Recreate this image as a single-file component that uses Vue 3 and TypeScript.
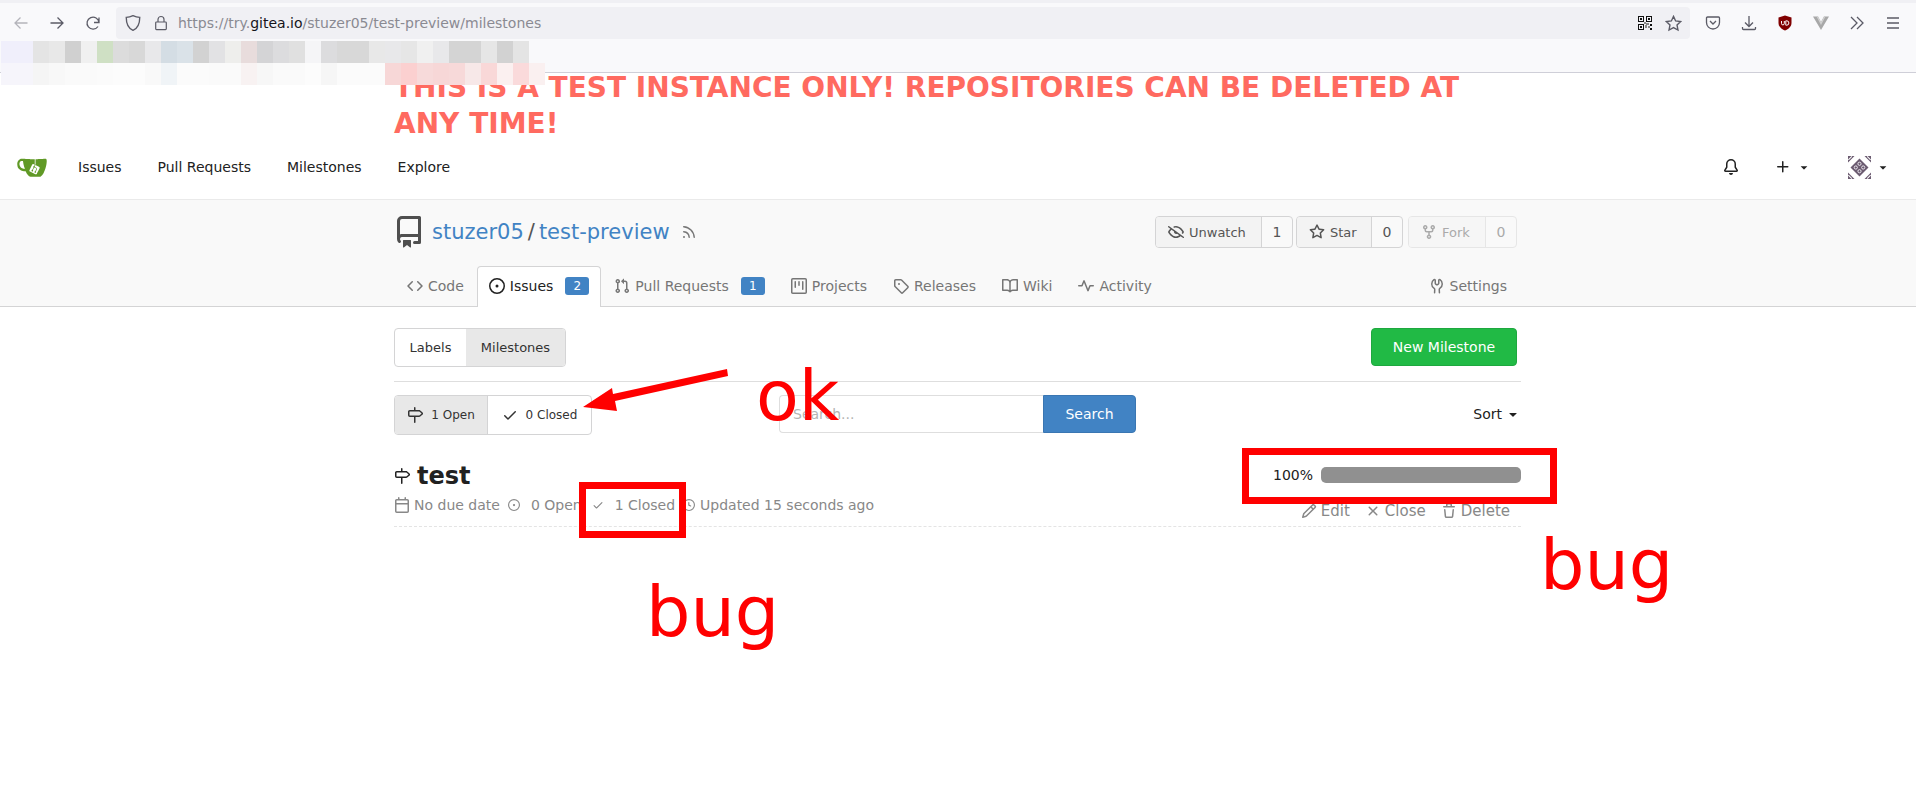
<script setup lang="ts">
const row1: string[] = ['#f0effb','#f0effb','#e4e4e4','#e8e8e8','#d0d0d0','#f0f0f0','#cfe0c4','#dcdcdc','#d8d8d8','#e8e8ea','#d4dde4','#dae2e8','#d2d2d2','#e2e2e4','#eeeeec','#e8dcdc','#d4d4d6','#dcdcde','#e0e0e0','#f5f5f7','#dcdcde','#d8d8d8','#d8d8d8','#e8e8e8','#e8e8ea','#e6e6e6','#f0f0f0','#e8e8ea','#d4d4d4','#d4d4d4','#e6e6e6','#d2d2d2','#e4e4e4']
const row2: string[] = ['#f6f5fb','#f6f5fb','#f5f5f5','#f8f8f8','#fafafa','#fafafa','#fbfbfb','#fcfcfc','#fcfcfc','#f9f9f9','#f0f4f7','#fbfbfb','#fbfbfb','#fafafa','#fafafa','#f8f2f2','#f7f7f7','#fafafa','#fafafa','#fcfcfc','#f6f6f6','#fbfbfb','#fbfbfb','#fbfbfb','#f7d7d7','#fbd0d0','#f7dada','#f7d7d7','#f7d9d9','#f7e8e8','#f9d8d8','#fbf0f0','#fadadb','#faf0f0']
const navItems: string[] = ['Issues', 'Pull Requests', 'Milestones', 'Explore']
</script>

<template>
  <div class="page">
    <header class="browser">
      <div class="topstrip"></div>
      <div class="toolbar">
        <div class="tb-left">
          <svg class="bi dim" viewBox="0 0 16 16"><path d="M14.500 8H2M7.500 2.500 2 8l5.500 5.500"/></svg>
          <svg class="bi" viewBox="0 0 16 16"><path d="M1.500 8H14M8.500 2.500 14 8l-5.500 5.500"/></svg>
          <svg class="bi" viewBox="0 0 16 16"><path d="M14 7.500A6 6 0 1 0 13 11.500M14 2.500v5h-5"/></svg>
        </div>
        <div class="urlbar">
          <svg class="ui" viewBox="0 0 16 16"><path d="M8 1.500c2 1 4 1.500 6 1.500 0 5-1.500 9.500-6 11.500C3.500 12.500 2 8 2 3c2 0 4-.5 6-1.500z"/></svg>
          <svg class="ui lock" viewBox="0 0 16 16"><path d="M5 7V4.500a3 3 0 0 1 6 0V7M3.500 7h9a.8.8 0 0 1 .8.8v6a.8.8 0 0 1-.8.8h-9a.8.8 0 0 1-.8-.8v-6a.8.8 0 0 1 .8-.8z"/></svg>
          <span class="url">https://try.<b>gitea.io</b>/stuzer05/test-preview/milestones</span>
          <svg class="qr" viewBox="0 0 14 14"><path fill="#111" d="M0 0h6v6H0zM1 1v4h4V1zM2 2h2v2H2zM8 0h6v6H8zM9 1v4h4V1zM10 2h2v2h-2zM0 8h6v6H0zM1 9v4h4V9zM2 10h2v2H2z" fill-rule="evenodd"/><path fill="#888" d="M6 6h2v2H6zM8 7h3v2H8zM7 9h2v3H7zM10 10h2v2h-2z"/><path fill="#111" d="M12 12h2v2h-2zM12 8h2v2h-2z"/></svg>
          <svg class="bi star" viewBox="0 0 16 16"><path d="m8 1.300 2 4.300 4.700.6-3.400 3.200.9 4.700L8 11.800l-4.200 2.300.9-4.700L1.300 6.200 6 5.600z"/></svg>
        </div>
        <div class="tb-right">
          <svg class="bi" viewBox="0 0 16 16"><path d="M2.500 2h11a1 1 0 0 1 1 1v4.500a6.500 6.500 0 0 1-13 0V3a1 1 0 0 1 1-1zM5 6l3 3 3-3"/></svg>
          <svg class="bi" viewBox="0 0 16 16"><path d="M8 1v10M4 7.500 8 11.500l4-4M1.500 12v1.500a1 1 0 0 0 1 1h11a1 1 0 0 0 1-1V12"/></svg>
          <svg class="bi" viewBox="0 0 16 16"><path class="ub" d="M8 .5 14.500 2.500V8c0 3.500-3 6.200-6.500 7.500C4.500 14.200 1.500 11.500 1.500 8V2.500z"/><path class="ub2" d="M4.500 6v2.500a1.400 1.400 0 0 0 2.800 0V6M8.800 5.800v4.400h.9a2.200 2.200 0 0 0 0-4.400z"/></svg>
          <svg class="bi" viewBox="0 0 16 16"><path class="vv" d="M0 1.500h5L8 7l3-5.500h5L8 15z"/><path class="vv2" d="M3.500 1.500h1.500L8 7l3-5.500h1.500L8 10z"/></svg>
          <svg class="bi" viewBox="0 0 16 16"><path d="m2 2 6 6-6 6M8 2l6 6-6 6"/></svg>
          <svg class="bi" viewBox="0 0 16 16"><path d="M2 3h12M2 8h12M2 13h12"/></svg>
        </div>
      </div>
    </header>

    <h2 class="banner">THIS IS A TEST INSTANCE ONLY! REPOSITORIES CAN BE DELETED AT ANY TIME!</h2>

    <nav class="nav">
      <div class="nav-left">
        <svg class="logo" viewBox="0 0 640 640"><path fill="#fff" d="m395.900 484.200-126.900-61c-12.500-6-17.900-21.200-11.800-33.800l61-126.900c6-12.500 21.200-17.900 33.800-11.800 17.200 8.300 27.100 13 27.100 13l-.1-109.200 16.700-.1.100 117.100s57.400 24.200 83.100 40.100c3.700 2.300 10.200 6.800 12.900 14.400 2.100 6.100 2 13.100-1 19.300l-61 126.900c-6.200 12.700-21.400 18.100-33.900 12"/><path fill="#609926" d="M622.700 149.800c-4.100-4.100-9.600-4-9.600-4s-117.200 6.600-177.900 8c-13.300.3-26.500.6-39.600.7v117.200c-5.500-2.600-11.100-5.300-16.600-7.900 0-36.400-.1-109.200-.1-109.200-29 .4-89.200-2.200-89.200-2.200s-141.400-7.100-156.800-8.500c-9.800-.6-22.500-2.100-39 1.500-8.700 1.800-33.500 7.400-53.800 26.900C-4.900 212.400 6.600 276.200 8 285.800c1.700 11.700 6.900 44.200 31.700 72.500 45.800 56.100 144.400 54.800 144.400 54.800s12.100 28.900 30.600 55.500c25 33.100 50.700 58.900 75.700 62 63 0 188.900-.1 188.900-.1s12 .1 28.300-10.300c14-8.500 26.500-23.400 26.500-23.400S547 483 565 451.500c5.500-9.700 10.100-19.100 14.100-28 0 0 55.200-117.100 55.200-231.100-1.100-34.500-9.600-40.600-11.600-42.600M125.600 353.900c-25.900-8.500-36.900-18.700-36.900-18.700S69.600 321.800 60 295.400c-16.500-44.200-1.400-71.200-1.400-71.200s8.400-22.500 38.500-30c13.800-3.700 31-3.100 31-3.100s7.100 59.400 15.700 94.200c7.200 29.200 24.800 77.700 24.800 77.700s-26.100-3.100-43-9.100m300.300 107.600s-6.100 14.500-19.600 15.400c-5.800.4-10.300-1.200-10.300-1.200s-.3-.1-5.300-2.100l-112.900-55s-10.900-5.700-12.800-15.600c-2.200-8.100 2.700-18.100 2.700-18.100L322 273s4.800-9.700 12.200-13c.6-.3 2.300-1 4.500-1.500 8.100-2.100 18 2.800 18 2.800L467.400 315s12.600 5.700 15.300 16.200c1.900 7.400-.5 14-1.800 17.200-6.300 15.400-55 113.100-55 113.100"/><path fill="#609926" d="M326.800 380.100c-8.200.1-15.400 5.800-17.300 13.800s2 16.300 9.100 20c7.700 4 17.500 1.800 22.700-5.400 5.100-7.100 4.300-16.900-1.800-23.100l24-49.100c1.500.1 3.700.2 6.200-.5 4.100-.9 7.100-3.600 7.100-3.600 4.200 1.800 8.600 3.800 13.200 6.100 4.800 2.400 9.300 4.900 13.400 7.300.9.500 1.800 1.100 2.800 1.900 1.600 1.300 3.400 3.100 4.700 5.500 1.900 5.500-1.900 14.900-1.900 14.900-2.300 7.600-18.400 40.600-18.400 40.600-8.100-.2-15.300 5-17.700 12.500-2.600 8.100 1.100 17.300 8.900 21.300s17.400 1.700 22.500-5.300c5-6.800 4.600-16.300-1.100-22.600 1.900-3.700 3.700-7.400 5.600-11.300 5-10.400 13.500-30.400 13.500-30.400.9-1.700 5.700-10.300 2.700-21.300-2.500-11.400-12.600-16.700-12.600-16.700-12.200-7.900-29.200-15.200-29.200-15.200s0-4.100-1.100-7.100c-1.100-3.100-2.800-5.100-3.900-6.300 4.700-9.700 9.400-19.300 14.100-29-4.100-2-8.100-4-12.200-6.100-4.800 9.800-9.700 19.700-14.500 29.500-6.700-.1-12.900 3.500-16.100 9.400-3.400 6.300-2.700 14.100 1.900 19.800z"/></svg>
        <a v-for="n in navItems" :key="n" class="nav-item">{{ n }}</a>
      </div>
      <div class="nav-right">
        <svg class="oct s16 bell" viewBox="0 0 16 16"><path d="M8 16a2 2 0 0 0 1.985-1.750c.017-.137-.097-.250-.235-.250h-3.500c-.138 0-.252.113-.235.250A2 2 0 0 0 8 16z"/><path fill-rule="evenodd" d="M8 1.500A3.500 3.500 0 0 0 4.500 5v2.947c0 .346-.102.683-.294.970l-1.703 2.556a.018.018 0 0 0-.003.010l.001.006c0 .002.002.004.004.006a.017.017 0 0 0 .006.004l.007.001h10.964l.007-.001a.016.016 0 0 0 .006-.004.016.016 0 0 0 .004-.006l.001-.007a.017.017 0 0 0-.003-.010l-1.703-2.554a1.750 1.750 0 0 1-.294-.970V5A3.500 3.500 0 0 0 8 1.500zM3 5a5 5 0 0 1 10 0v2.947c0 .050.015.098.042.139l1.703 2.555A1.518 1.518 0 0 1 13.482 13H2.518a1.518 1.518 0 0 1-1.263-2.360l1.703-2.554A.250.250 0 0 0 3 7.947V5z"/></svg>
        <svg class="oct s16 plus" viewBox="0 0 16 16"><path d="M7.750 2a.750.750 0 0 1 .750.750V7h4.250a.750.750 0 1 1 0 1.500H8.500v4.250a.750.750 0 1 1-1.500 0V8.500H2.750a.750.750 0 0 1 0-1.500H7V2.750A.750.750 0 0 1 7.750 2z"/></svg>
        <svg class="oct s14 caret1" viewBox="0 0 16 16"><path d="M4.427 7.427l3.396 3.396a.250.250 0 0 0 .354 0l3.396-3.396A.250.250 0 0 0 11.396 7H4.604a.250.250 0 0 0-.177.427z"/></svg>
        <svg class="avatar" viewBox="0 0 25 25"><path fill="#6b5b70" d="M12.500 3.500 21.500 12.500 12.500 21.500 3.500 12.500z"/><g fill="none" stroke="#e9e5ec" stroke-width="1"><circle cx="12.500" cy="8.800" r="1.600"/><circle cx="8.800" cy="12.500" r="1.600"/><circle cx="16.200" cy="12.500" r="1.600"/><circle cx="12.500" cy="16.200" r="1.600"/></g><path fill="#6b5b70" d="M1 1h6.500L1 7.500zM24 1h-6.500L24 7.500zM1 24h6.500L1 17.500zM24 24h-6.500L24 17.500z"/><path fill="#fff" d="M1 4.500 4.500 1l.7.7-3.500 3.500zM24 4.500 20.500 1l-.7.7 3.500 3.500zM1 20.500l3.500 3.500.7-.7-3.500-3.500zM24 20.500l-3.500 3.500-.7-.7 3.500-3.500z"/></svg>
        <svg class="oct s14 caret2" viewBox="0 0 16 16"><path d="M4.427 7.427l3.396 3.396a.250.250 0 0 0 .354 0l3.396-3.396A.250.250 0 0 0 11.396 7H4.604a.250.250 0 0 0-.177.427z"/></svg>
      </div>
    </nav>

    <section class="repo-head">
      <div class="container">
        <div class="repo-title">
          <div class="repo-name">
            <svg class="oct repo-icon" viewBox="0 0 16 16"><path fill-rule="evenodd" d="M2 2.500A2.500 2.500 0 0 1 4.500 0h8.750a.750.750 0 0 1 .750.750v12.500a.750.750 0 0 1-.750.750h-2.500a.750.750 0 1 1 0-1.500h1.750v-2h-8a1 1 0 0 0-.714 1.700.750.750 0 0 1-1.072 1.050A2.495 2.495 0 0 1 2 11.500v-9zm10.500-1V9h-8c-.356 0-.694.074-1 .208V2.500a1 1 0 0 1 1-1h8zM5 12.250v3.250a.250.250 0 0 0 .4.200l1.450-1.087a.250.250 0 0 1 .3 0L8.600 15.700a.250.250 0 0 0 .4-.200v-3.250a.250.250 0 0 0-.250-.250h-3.500a.250.250 0 0 0-.250.250z"/></svg>
            <a class="link">stuzer05</a><span class="slash">/</span><a class="link">test-preview</a>
            <svg class="oct s16 rss" viewBox="0 0 16 16"><path d="M2.002 2.725a.750.750 0 0 1 .797-.699C8.790 2.420 13.580 7.210 13.974 13.201a.750.750 0 1 1-1.497.098 10.502 10.502 0 0 0-9.776-9.776.750.750 0 0 1-.700-.798zM2 13a1 1 0 1 1 2 0 1 1 0 0 1-2 0zm.840-5.950a.750.750 0 1 0-.130 1.494 5.250 5.250 0 0 1 4.747 4.746.750.750 0 1 0 1.494-.130 6.750 6.750 0 0 0-6.110-6.110z"/></svg>
          </div>
          <div class="repo-btns">
            <div class="rbtn">
              <span class="rb-main w-watch"><svg class="oct s16" viewBox="0 0 16 16"><path fill-rule="evenodd" d="M.143 2.310a.750.750 0 0 1 1.047-.167l14.500 10.500a.750.750 0 1 1-.880 1.214l-2.248-1.628C11.346 13.190 9.792 14 8 14c-1.981 0-3.670-.992-4.933-2.078C1.797 10.832.880 9.577.430 8.900a1.618 1.618 0 0 1 0-1.797c.353-.533.995-1.420 1.868-2.305L.310 3.357A.750.750 0 0 1 .143 2.310zm3.386 3.378a14.210 14.210 0 0 0-1.850 2.244.120.120 0 0 0-.022.068c0 .021.006.045.022.068.412.621 1.242 1.750 2.366 2.717C5.175 11.758 6.527 12.500 8 12.500c1.195 0 2.310-.488 3.290-1.191L9.063 9.695A2 2 0 0 1 6.058 7.520l-2.530-1.832zM8 3.500c-.516 0-1.017.090-1.499.251a.750.750 0 1 1-.473-1.423A6.230 6.230 0 0 1 8 2c1.981 0 3.670.992 4.933 2.078 1.270 1.091 2.187 2.345 2.637 3.023a1.619 1.619 0 0 1 0 1.798c-.110.166-.248.365-.410.587a.750.750 0 1 1-1.210-.887c.148-.201.272-.382.371-.530a.119.119 0 0 0 0-.137c-.412-.621-1.242-1.750-2.366-2.717C10.825 4.242 9.473 3.500 8 3.500z"/></svg>Unwatch</span>
              <span class="rb-count">1</span>
            </div>
            <div class="rbtn">
              <span class="rb-main w-star"><svg class="oct s16" viewBox="0 0 16 16"><path fill-rule="evenodd" d="M8 .250a.750.750 0 0 1 .673.418l1.882 3.815 4.210.612a.750.750 0 0 1 .416 1.279l-3.046 2.970.719 4.192a.750.750 0 0 1-1.088.791L8 12.347l-3.766 1.980a.750.750 0 0 1-1.088-.790l.720-4.194L.818 6.374a.750.750 0 0 1 .416-1.280l4.210-.611L7.327.668A.750.750 0 0 1 8 .250zm0 2.445L6.615 5.500a.750.750 0 0 1-.564.410l-3.097.450 2.240 2.184a.750.750 0 0 1 .216.664l-.528 3.084 2.769-1.456a.750.750 0 0 1 .698 0l2.770 1.456-.530-3.084a.750.750 0 0 1 .216-.664l2.240-2.183-3.096-.450a.750.750 0 0 1-.564-.410L8 2.694v.001z"/></svg>Star</span>
              <span class="rb-count">0</span>
            </div>
            <div class="rbtn disabled">
              <span class="rb-main w-fork"><svg class="oct s16" viewBox="0 0 16 16"><path fill-rule="evenodd" d="M5 3.250a.750.750 0 1 1-1.500 0 .750.750 0 0 1 1.500 0zm0 2.122a2.250 2.250 0 1 0-1.500 0v.878A2.250 2.250 0 0 0 5.750 8.500h1.500v2.128a2.251 2.251 0 1 0 1.500 0V8.500h1.500a2.250 2.250 0 0 0 2.250-2.250v-.878a2.250 2.250 0 1 0-1.500 0v.878a.750.750 0 0 1-.750.750h-4.500A.750.750 0 0 1 5 6.250v-.878zm3.750 7.378a.750.750 0 1 1-1.500 0 .750.750 0 0 1 1.500 0zm3-8.750a.750.750 0 1 0 0-1.500.750.750 0 0 0 0 1.500z"/></svg>Fork</span>
              <span class="rb-count">0</span>
            </div>
          </div>
        </div>
        <div class="tabs">
          <a class="tab"><svg class="oct s16" viewBox="0 0 16 16"><path d="M4.720 3.220a.750.750 0 0 1 1.060 1.060L2.060 8l3.720 3.720a.750.750 0 1 1-1.060 1.060L.470 8.530a.750.750 0 0 1 0-1.060l4.250-4.250zm6.560 0a.750.750 0 1 0-1.060 1.060L13.940 8l-3.720 3.720a.750.750 0 1 0 1.060 1.060l4.250-4.250a.750.750 0 0 0 0-1.060l-4.250-4.250z"/></svg>Code</a>
          <a class="tab active"><svg class="oct s16" viewBox="0 0 16 16"><path d="M8 9.500a1.500 1.500 0 1 0 0-3 1.500 1.500 0 0 0 0 3z"/><path fill-rule="evenodd" d="M8 0a8 8 0 1 0 0 16A8 8 0 0 0 8 0zM1.500 8a6.500 6.500 0 1 1 13 0 6.500 6.500 0 0 1-13 0z"/></svg>Issues<span class="count">2</span></a>
          <a class="tab"><svg class="oct s16" viewBox="0 0 16 16"><path fill-rule="evenodd" d="M7.177 3.073L9.573.677A.250.250 0 0 1 10 .854v4.792a.250.250 0 0 1-.427.177L7.177 3.427a.250.250 0 0 1 0-.354zM3.750 2.500a.750.750 0 1 0 0 1.500.750.750 0 0 0 0-1.500zm-2.250.750a2.250 2.250 0 1 1 3 2.122v5.256a2.251 2.251 0 1 1-1.500 0V5.372A2.250 2.250 0 0 1 1.500 3.250zM11 2.500h-1V4h1a1 1 0 0 1 1 1v5.628a2.251 2.251 0 1 0 1.500 0V5A2.500 2.500 0 0 0 11 2.500zm1 10.250a.750.750 0 1 1 1.500 0 .750.750 0 0 1-1.500 0zM3.750 12a.750.750 0 1 0 0 1.500.750.750 0 0 0 0-1.500z"/></svg>Pull Requests<span class="count">1</span></a>
          <a class="tab"><svg class="oct s16" viewBox="0 0 16 16"><path fill-rule="evenodd" d="M1.750 0A1.750 1.750 0 0 0 0 1.750v12.500C0 15.216.784 16 1.750 16h12.500A1.750 1.750 0 0 0 16 14.250V1.750A1.750 1.750 0 0 0 14.250 0H1.750zM1.500 1.750a.250.250 0 0 1 .250-.250h12.500a.250.250 0 0 1 .250.250v12.500a.250.250 0 0 1-.250.250H1.750a.250.250 0 0 1-.250-.250V1.750zM11.750 3a.750.750 0 0 0-.750.750v7.500a.750.750 0 0 0 1.500 0v-7.500a.750.750 0 0 0-.750-.750zm-8.250.750a.750.750 0 0 1 1.500 0v5.500a.750.750 0 0 1-1.500 0v-5.500zM8 3a.750.750 0 0 0-.750.750v3.500a.750.750 0 0 0 1.500 0v-3.500A.750.750 0 0 0 8 3z"/></svg>Projects</a>
          <a class="tab"><svg class="oct s16" viewBox="0 0 16 16"><path fill-rule="evenodd" d="M2.500 7.775V2.750a.250.250 0 0 1 .250-.250h5.025a.250.250 0 0 1 .177.073l6.250 6.250a.250.250 0 0 1 0 .354l-5.025 5.025a.250.250 0 0 1-.354 0l-6.250-6.250a.250.250 0 0 1-.073-.177zm-1.500 0V2.750C1 1.784 1.784 1 2.750 1h5.025c.464 0 .910.184 1.238.513l6.250 6.250a1.750 1.750 0 0 1 0 2.474l-5.026 5.026a1.750 1.750 0 0 1-2.474 0l-6.250-6.250A1.750 1.750 0 0 1 1 7.775zM6 5a1 1 0 1 0 0 2 1 1 0 0 0 0-2z"/></svg>Releases</a>
          <a class="tab"><svg class="oct s16" viewBox="0 0 16 16"><path fill-rule="evenodd" d="M0 1.750A.750.750 0 0 1 .750 1h4.253c1.227 0 2.317.590 3 1.501A3.744 3.744 0 0 1 11.006 1h4.245a.750.750 0 0 1 .750.750v10.500a.750.750 0 0 1-.750.750h-4.507a2.250 2.250 0 0 0-1.591.659l-.622.621a.750.750 0 0 1-1.060 0l-.622-.621A2.250 2.250 0 0 0 5.258 13H.750a.750.750 0 0 1-.750-.750V1.750zm8.755 3a2.250 2.250 0 0 1 2.250-2.250H14.500v9h-3.757c-.710 0-1.400.201-1.992.572l.004-7.322zm-1.504 7.324l.004-5.073-.002-2.253A2.250 2.250 0 0 0 5.003 2.500H1.500v9h3.757a3.750 3.750 0 0 1 1.994.574z"/></svg>Wiki</a>
          <a class="tab"><svg class="oct s16" viewBox="0 0 16 16"><path d="M6 2a.750.750 0 0 1 .696.471L10 10.731l1.304-3.260A.750.750 0 0 1 12 7h3.250a.750.750 0 0 1 0 1.500h-2.742l-1.812 4.528a.750.750 0 0 1-1.392 0L6 4.770 4.696 8.030A.750.750 0 0 1 4 8.500H.750a.750.750 0 0 1 0-1.500h2.742l1.812-4.529A.750.750 0 0 1 6 2z"/></svg>Activity</a>
          <a class="tab settings"><svg class="oct s16" viewBox="0 0 16 16"><path d="M5.433 2.304A4.494 4.494 0 0 0 3.500 6c0 1.598.832 3.002 2.090 3.802.518.328.929.923.902 1.640v.008l-.164 3.337a.750.750 0 1 1-1.498-.073l.163-3.330c.002-.085-.050-.216-.207-.316A5.996 5.996 0 0 1 2 6a5.994 5.994 0 0 1 2.567-4.920 1.482 1.482 0 0 1 1.673-.040c.462.296.760.827.760 1.423v2.820c0 .082.041.160.110.206l.750.510a.250.250 0 0 0 .280 0l.750-.510A.250.250 0 0 0 9 5.282V2.463c0-.596.298-1.127.760-1.423a1.482 1.482 0 0 1 1.673.040A5.994 5.994 0 0 1 14 6a5.996 5.996 0 0 1-2.786 5.068c-.157.100-.209.230-.207.315l.163 3.330a.750.750 0 1 1-1.498.074l-.164-3.345c-.027-.717.384-1.312.902-1.640A4.496 4.496 0 0 0 12.500 6a4.494 4.494 0 0 0-1.933-3.696c-.024.017-.067.067-.067.160v2.818a1.750 1.750 0 0 1-.767 1.448l-.750.510a1.750 1.750 0 0 1-1.966 0l-.750-.510A1.750 1.750 0 0 1 5.500 5.282V2.463c0-.092-.043-.142-.067-.159z"/></svg>Settings</a>
        </div>
      </div>
    </section>

    <main class="container content">
      <div class="row-top">
        <div class="group">
          <a class="gbtn lab">Labels</a>
          <a class="gbtn mil on">Milestones</a>
        </div>
        <a class="new">New Milestone</a>
      </div>
      <div class="divider"></div>
      <div class="row-filter">
        <div class="group small">
          <a class="gbtn op on"><svg class="oct s16" viewBox="0 0 16 16"><path fill-rule="evenodd" d="M7.750 0a.750.750 0 0 1 .750.750V3h3.634c.414 0 .814.147 1.130.414l2.070 1.750a1.750 1.750 0 0 1 0 2.672l-2.070 1.750a1.750 1.750 0 0 1-1.130.414H8.500v5.250a.750.750 0 1 1-1.500 0V10H2.750A1.750 1.750 0 0 1 1 8.250v-3.500C1 3.784 1.784 3 2.750 3H7V.750A.750.750 0 0 1 7.750 0zm0 8.500h4.384a.250.250 0 0 0 .161-.060l2.070-1.750a.250.250 0 0 0 0-.380l-2.070-1.750a.250.250 0 0 0-.161-.060H2.750a.250.250 0 0 0-.250.250v3.500c0 .138.112.250.250.250h5z"/></svg>1 Open</a>
          <a class="gbtn cl"><svg class="oct s16" viewBox="0 0 16 16"><path d="M13.780 4.220a.750.750 0 0 1 0 1.060l-7.250 7.250a.750.750 0 0 1-1.060 0L2.220 9.280a.750.750 0 0 1 1.060-1.060L6 10.940l6.720-6.720a.750.750 0 0 1 1.060 0z"/></svg>0 Closed</a>
        </div>
        <div class="search">
          <input class="search-in" placeholder="Search..." />
          <button class="search-btn">Search</button>
        </div>
        <div class="sort">Sort<svg class="oct s16" viewBox="0 0 16 16"><path d="M4.427 7.427l3.396 3.396a.250.250 0 0 0 .354 0l3.396-3.396A.250.250 0 0 0 11.396 7H4.604a.250.250 0 0 0-.177.427z"/></svg></div>
      </div>

      <div class="ms">
        <div class="ms-top">
          <div class="ms-title">
            <svg class="oct s16" viewBox="0 0 16 16"><path fill-rule="evenodd" d="M7.750 0a.750.750 0 0 1 .750.750V3h3.634c.414 0 .814.147 1.130.414l2.070 1.750a1.750 1.750 0 0 1 0 2.672l-2.070 1.750a1.750 1.750 0 0 1-1.130.414H8.500v5.250a.750.750 0 1 1-1.500 0V10H2.750A1.750 1.750 0 0 1 1 8.250v-3.500C1 3.784 1.784 3 2.750 3H7V.750A.750.750 0 0 1 7.750 0zm0 8.500h4.384a.250.250 0 0 0 .161-.060l2.070-1.750a.250.250 0 0 0 0-.380l-2.070-1.750a.250.250 0 0 0-.161-.060H2.750a.250.250 0 0 0-.250.250v3.500c0 .138.112.250.250.250h5z"/></svg>
            <span>test</span>
          </div>
          <div class="ms-progress"><span>100%</span><div class="bar"></div></div>
        </div>
        <div class="ms-bottom">
          <div class="meta">
            <span class="mi m1"><svg class="oct s16" viewBox="0 0 16 16"><path fill-rule="evenodd" d="M4.750 0a.750.750 0 0 1 .750.750V2h5V.750a.750.750 0 0 1 1.500 0V2h1.250c.966 0 1.750.784 1.750 1.750v10.500A1.750 1.750 0 0 1 13.250 16H2.750A1.750 1.750 0 0 1 1 14.250V3.750C1 2.784 1.784 2 2.750 2H4V.750A.750.750 0 0 1 4.750 0zm0 3.500h8.500a.250.250 0 0 1 .250.250V6h-11V3.750a.250.250 0 0 1 .250-.250h2zm-2.250 4v6.750c0 .138.112.250.250.250h10.500a.250.250 0 0 0 .250-.250V7.500h-11z"/></svg>No due date</span>
            <span class="mi m2"><svg class="oct s12" viewBox="0 0 16 16"><path d="M8 9.500a1.500 1.500 0 1 0 0-3 1.500 1.500 0 0 0 0 3z"/><path fill-rule="evenodd" d="M8 0a8 8 0 1 0 0 16A8 8 0 0 0 8 0zM1.500 8a6.500 6.500 0 1 1 13 0 6.500 6.500 0 0 1-13 0z"/></svg>0 Open</span>
            <span class="mi m3"><svg class="oct s12" viewBox="0 0 16 16"><path d="M13.780 4.220a.750.750 0 0 1 0 1.060l-7.250 7.250a.750.750 0 0 1-1.060 0L2.220 9.280a.750.750 0 0 1 1.060-1.060L6 10.940l6.720-6.720a.750.750 0 0 1 1.060 0z"/></svg>1 Closed</span>
            <span class="mi m4"><svg class="oct s12" viewBox="0 0 16 16"><path fill-rule="evenodd" d="M1.500 8a6.500 6.500 0 1 1 13 0 6.500 6.500 0 0 1-13 0zM8 0a8 8 0 1 0 0 16A8 8 0 0 0 8 0zm.500 4.750a.750.750 0 0 0-1.500 0v3.500a.750.750 0 0 0 .471.696l2.500 1a.750.750 0 0 0 .557-1.392L8.500 7.742V4.750z"/></svg>Updated 15 seconds ago</span>
          </div>
          <div class="acts">
            <a class="act"><svg class="oct s16" viewBox="0 0 16 16"><path fill-rule="evenodd" d="M11.013 1.427a1.750 1.750 0 0 1 2.474 0l1.086 1.086a1.750 1.750 0 0 1 0 2.474l-8.610 8.610c-.210.210-.470.364-.756.445l-3.251.930a.750.750 0 0 1-.927-.928l.929-3.250a1.750 1.750 0 0 1 .445-.758l8.610-8.610zm1.414 1.060a.250.250 0 0 0-.354 0L10.811 3.750l1.439 1.440 1.263-1.263a.250.250 0 0 0 0-.354l-1.086-1.086zM11.189 6.250L9.750 4.810l-6.286 6.287a.250.250 0 0 0-.064.108l-.558 1.953 1.953-.558a.249.249 0 0 0 .108-.064l6.286-6.286z"/></svg>Edit</a>
            <a class="act"><svg class="oct s16" viewBox="0 0 16 16"><path d="M3.720 3.720a.750.750 0 0 1 1.060 0L8 6.940l3.220-3.220a.750.750 0 1 1 1.060 1.060L9.060 8l3.220 3.220a.750.750 0 1 1-1.060 1.060L8 9.060l-3.220 3.220a.750.750 0 0 1-1.060-1.060L6.940 8 3.720 4.780a.750.750 0 0 1 0-1.060z"/></svg>Close</a>
            <a class="act"><svg class="oct s16" viewBox="0 0 16 16"><path fill-rule="evenodd" d="M6.500 1.750a.250.250 0 0 1 .250-.250h2.500a.250.250 0 0 1 .250.250V3h-3V1.750zm4.500 0V3h2.250a.750.750 0 0 1 0 1.500H2.750a.750.750 0 0 1 0-1.500H5V1.750C5 .784 5.784 0 6.750 0h2.500C10.216 0 11 .784 11 1.750zM4.496 6.675a.750.750 0 1 0-1.492.150l.660 6.600A1.750 1.750 0 0 0 5.405 15h5.190c.900 0 1.652-.681 1.741-1.576l.660-6.600a.750.750 0 0 0-1.492-.149l-.660 6.600a.250.250 0 0 1-.249.225h-5.190a.250.250 0 0 1-.249-.225l-.660-6.600z"/></svg>Delete</a>
          </div>
        </div>
      </div>
    </main>

    <!-- privacy mosaic laid over the bookmarks bar -->
    <div class="mosaic">
      <div class="mrow"><i v-for="(c, i) in row1" :key="i" :style="{ background: c }"></i></div>
      <div class="mrow"><i v-for="(c, i) in row2" :key="i" :style="{ background: c }"></i></div>
    </div>

    <!-- hand-drawn red annotations -->
    <svg class="arrow" viewBox="0 0 152 50"><path fill="#ff0000" d="M147 4 148 11 35 36 37 46 3 42 32 23 33 29z"/></svg>
    <span class="note ok">ok</span>
    <span class="note bug1">bug</span>
    <span class="note bug2">bug</span>
    <div class="box box1"></div>
    <div class="box box2"></div>
  </div>
</template>

<style>
html, body { margin: 0; background: #fff; }
</style>

<style scoped>
.page { position: relative; width: 1916px; height: 807px; overflow: hidden; background: #fff; font-family: "DejaVu Sans", sans-serif; font-size: 14px; color: #212121; }
a { text-decoration: none; }
.oct { fill: currentColor; flex: none; display: block; }
.s16 { width: 16px; height: 16px; }
.s14 { width: 14px; height: 14px; }
.s12 { width: 12px; height: 12px; }

/* browser chrome */
.browser { height: 73px; box-sizing: border-box; background: #f9f9fb; border-bottom: 1px solid #cfcfd8; }
.topstrip { height: 3px; background: #f0f0f4; }
.toolbar { height: 32px; margin-top: 4px; display: flex; align-items: center; }
.tb-left { width: 116px; box-sizing: border-box; padding-left: 13px; display: flex; gap: 20px; }
.bi { width: 16px; height: 16px; fill: none; stroke: #5b5b66; stroke-width: 1.300; flex: none; }
.bi.dim { stroke: #b4b4ba; }
.urlbar { width: 1574px; height: 32px; background: #f0f0f4; border-radius: 4px; display: flex; align-items: center; box-sizing: border-box; padding-left: 8px; }
.ui { width: 18px; height: 18px; fill: none; stroke: #5b5b66; stroke-width: 1.200; flex: none; }
.ui.lock { margin-left: 11px; width: 16px; height: 16px; }
.url { margin-left: 9px; color: #8a8a92; font-size: 14px; flex: 1; white-space: nowrap; }
.url b { font-weight: 400; color: #15141a; }
.qr { width: 14px; height: 14px; flex: none; }
.bi.star { margin-left: 13px; margin-right: 8px; width: 17px; height: 17px; }
.tb-right { display: flex; gap: 20px; margin-left: 15px; }
.ub { fill: #800000; stroke: none; }
.ub2 { stroke: #fff; stroke-width: 1; }
.vv { fill: #a8a8a8; stroke: none; }
.vv2 { fill: #d0d0d0; stroke: none; }

/* banner and nav */
.banner { margin: -3px 0 0 394px; width: 1100px; font-size: 28px; line-height: 35.500px; font-weight: 700; color: #ff6a60; }
.nav { height: 58px; box-sizing: border-box; padding-bottom: 6px; display: flex; justify-content: space-between; align-items: center; }
.nav-left { display: flex; align-items: center; padding-left: 17px; }
.logo { width: 30px; height: 30px; margin-right: 31px; }
.nav-item { color: #212121; margin-right: 36px; white-space: nowrap; }
.nav-right { display: flex; align-items: center; padding-right: 26px; }
.bell { margin-right: 36px; }
.plus { margin-right: 6px; }
.caret1 { margin-right: 36px; }
.avatar { width: 25px; height: 25px; margin-right: 4px; }

/* repo header */
.repo-head { height: 108px; box-sizing: border-box; background: #f9f9f9; border-top: 1px solid #eaeaea; border-bottom: 1px solid #d4d4d5; }
.container { margin-left: 394px; width: 1127px; }
.repo-head .container { height: 100%; display: flex; flex-direction: column; }
.repo-title { display: flex; justify-content: space-between; align-items: flex-start; padding-top: 16px; padding-right: 4px; height: 66px; box-sizing: border-box; }
.repo-name { display: flex; align-items: center; height: 32px; font-size: 21px; }
.repo-icon { width: 32px; height: 32px; margin-left: -1px; margin-right: 7px; color: #4f4f4f; }
.link { color: #4183c4; }
.slash { margin: 0 4px; color: #555; }
.rss { margin-left: 11px; color: #777; }
.repo-btns { display: flex; gap: 3px; }
.rbtn { display: flex; height: 32px; box-sizing: border-box; border: 1px solid #d4d4d5; border-radius: 4px; font-size: 13px; color: #555; background: #f9f9f9; }
.rb-main { display: flex; align-items: center; gap: 5px; background: #f3f3f3; box-sizing: border-box; padding-left: 12px; border-right: 1px solid #d4d4d5; border-radius: 3px 0 0 3px; }
.w-watch { width: 106px; }
.w-star { width: 75px; }
.w-fork { width: 77px; }
.rb-count { width: 30px; display: flex; align-items: center; justify-content: center; font-size: 14px; }
.rbtn.disabled { color: #aaa; border-color: #e6e6e6; margin-left: 2px; }
.rbtn.disabled .rb-main { border-right-color: #e6e6e6; background: #f6f6f6; }
.tabs { display: flex; align-items: stretch; flex: 1; margin-bottom: -1px; color: #767676; }
.tab { display: flex; align-items: center; gap: 5px; padding: 0 13px 2px; color: #767676; white-space: nowrap; box-sizing: border-box; }
.tab.active { background: #fff; color: #212121; border: 1px solid #d4d4d5; border-bottom: none; border-radius: 4px 4px 0 0; padding: 0 11px 2px; }
.tab.settings { margin-left: auto; margin-right: 1px; }
.count { margin-left: 7px; background: #4183c4; color: #fff; border-radius: 3px; font-size: 12px; width: 24px; height: 18px; display: flex; align-items: center; justify-content: center; }

/* content */
.content { padding-top: 21px; }
.row-top { display: flex; justify-content: space-between; padding-right: 4px; }
.group { display: flex; height: 39px; border: 1px solid #d4d4d5; border-radius: 4px; box-sizing: border-box; font-size: 13px; color: #333; overflow: hidden; }
.gbtn { display: flex; align-items: center; justify-content: center; box-sizing: border-box; color: #333; gap: 8px; }
.gbtn.on { background: #e8e8e8; }
.lab { width: 71px; }
.mil { width: 99px; }
.new { width: 146px; height: 38px; background: #21ba45; border: 1px solid #1ea83f; border-radius: 4px; box-sizing: border-box; color: #fff; font-size: 14px; display: flex; align-items: center; justify-content: center; }
.divider { height: 1px; background: #dedede; margin-top: 14px; }
.row-filter { display: flex; align-items: flex-start; padding-top: 13px; }
.group.small { height: 40px; width: 198px; font-size: 12px; }
.op { width: 93px; border-right: 1px solid #d4d4d5; }
.cl { flex: 1; }
.search { margin-left: 187px; display: flex; height: 38px; }
.search-in { width: 264px; height: 38px; box-sizing: border-box; border: 1px solid #dedede; border-right: none; border-radius: 4px 0 0 4px; padding: 0 13px; font: 14px "DejaVu Sans", sans-serif; outline: none; background: #fff; }
.search-in::placeholder { color: #b4b4b4; opacity: 1; }
.search-btn { width: 93px; height: 38px; background: #4183c4; color: #fff; border: 1px solid #3a76b2; border-radius: 0 4px 4px 0; font: 14px "DejaVu Sans", sans-serif; padding: 0; }
.sort { margin-left: auto; display: flex; align-items: center; gap: 3px; height: 38px; font-size: 14px; color: #212121; }
.ms { margin-top: 25px; border-bottom: 1px dashed #e4e4e4; height: 68px; box-sizing: border-box; }
.ms-top { display: flex; justify-content: space-between; align-items: center; height: 32px; margin-top: -1px; }
.ms-title { display: flex; align-items: center; gap: 7px; font-size: 24px; font-weight: 700; color: #212121; line-height: 32px; margin-top: 2px; }
.ms-progress { display: flex; align-items: center; gap: 8px; font-size: 14px; color: #212121; }
.bar { width: 200px; height: 16px; border-radius: 5px; background: #909090; }
.ms-bottom { display: flex; justify-content: space-between; color: #888; }
.meta { display: flex; padding-top: 4px; height: 20px; align-items: center; }
.mi { display: flex; align-items: center; white-space: nowrap; }
.mi.m1 { gap: 4px; margin-right: 8px; }
.mi.m2 { gap: 11px; margin-right: 10px; }
.mi.m3 { gap: 11px; margin-right: 8px; }
.mi.m4 { gap: 5px; }
.acts { display: flex; gap: 15px; padding-right: 11px; padding-top: 10px; height: 20px; align-items: center; font-size: 15px; }
.act { display: flex; align-items: center; gap: 4px; color: #888; }

/* overlays */
.mosaic { position: absolute; left: 1px; top: 41px; }
.mrow { display: flex; height: 22px; }
.mrow i { display: block; width: 16px; height: 22px; }
.arrow { position: absolute; left: 580px; top: 365px; width: 152px; height: 50px; }
.note { position: absolute; color: #ff0000; font-size: 70px; line-height: 80px; }
.ok { left: 756px; top: 356px; }
.bug1 { left: 646px; top: 572px; }
.bug2 { left: 1540px; top: 525px; }
.box { position: absolute; box-sizing: border-box; border: 7px solid #ff0000; }
.box1 { left: 579px; top: 482px; width: 107px; height: 56px; }
.box2 { left: 1242px; top: 448px; width: 315px; height: 56px; }
</style>
